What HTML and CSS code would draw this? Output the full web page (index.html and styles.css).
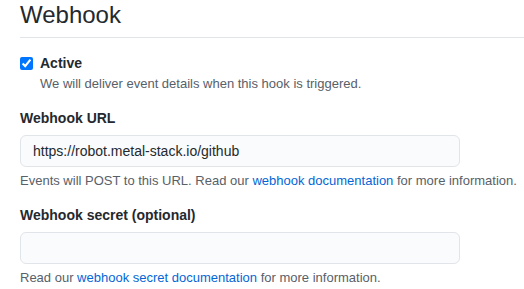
FILE: index.html
```html
<!DOCTYPE html>
<html lang="en">
<head>
    <meta charset="UTF-8" name="viewport" content="width=device-width, initial-scale=1.0">
    <title>Webhook</title>
    <link rel="stylesheet" href="styles.css">
</head>
<body>
<div class="settings">
    <!-- Section title -->
    <h2 class="subhead">Webhook</h2>

    <!-- Active toggle -->
    <div class="form-checkbox">
        <input type="checkbox" id="hook-active" checked>
        <div>
            <label for="hook-active">Active</label>
            <p class="note">We will deliver event details when this hook is triggered.</p>
        </div>
    </div>

    <!-- Payload URL -->
    <div class="form-group">
        <label for="hook-url">Webhook URL</label>
        <input type="text" class="form-control" id="hook-url" value="https://robot.metal-stack.io/github">
        <p class="note">Events will POST to this URL. Read our <a href="#">webhook documentation</a> for more information.</p>
    </div>

    <!-- Secret -->
    <div class="form-group">
        <label for="hook-secret">Webhook secret (optional)</label>
        <input type="text" class="form-control" id="hook-secret">
        <p class="note">Read our <a href="#">webhook secret documentation</a> for more information.</p>
    </div>
</div>
</body>
</html>
```

FILE: styles.css
```css
* {
    padding: 0;
    margin: 0;
    box-sizing: border-box;
    font-family: "Liberation Sans", Arial, sans-serif;
}

body {
    background: #ffffff;
    color: #24292e;
    font-size: 14px;
    line-height: 20px;
}

.settings {
    padding-left: 20px;
}

.subhead {
    font-size: 24px;
    font-weight: normal;
    line-height: 30px;
    padding-bottom: 7px;
    border-bottom: 1px solid #e1e4e8;
    margin-bottom: 15px;
}

label {
    font-weight: bold;
    display: block;
}

.note {
    font-size: 13px;
    line-height: 18px;
    color: #586069;
}

.note a {
    color: #0366d6;
    text-decoration: none;
}

.form-checkbox {
    display: flex;
    align-items: flex-start;
    gap: 7px;
}

.form-checkbox input {
    width: 13px;
    height: 13px;
    margin-top: 4px;
}

.form-checkbox .note {
    margin-top: 2px;
}

.form-group {
    margin-top: 15px;
}

.form-group label {
    margin-bottom: 7px;
}

.form-control {
    display: block;
    width: 440px;
    height: 32px;
    padding: 5px 12px;
    font-size: 14px;
    color: #24292e;
    background-color: #fafbfc;
    border: 1px solid #e1e4e8;
    border-radius: 6px;
    outline: none;
}

.form-group .note {
    margin-top: 5px;
}
```
